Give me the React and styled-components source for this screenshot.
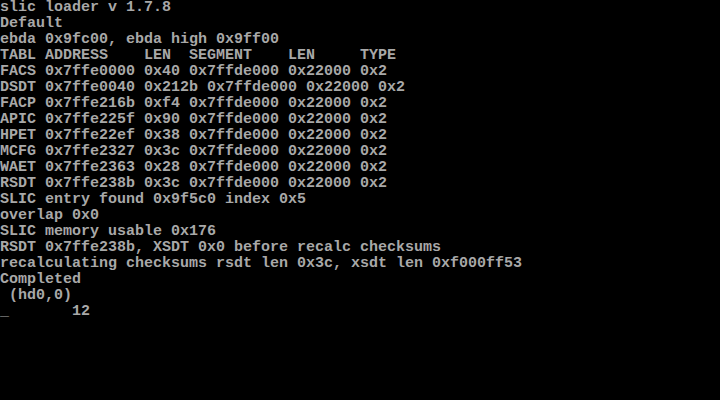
import React from "react";
import styled, { createGlobalStyle } from "styled-components";

const Global = createGlobalStyle`
  html, body { margin: 0; padding: 0; background: #000; }
  body { width: 720px; height: 400px; overflow: hidden; }
`;

const Screen = styled.div`
  width: 720px;
  height: 400px;
  background: #000;
  color: #a8a8a8;
  font-family: "Liberation Mono", "DejaVu Sans Mono", monospace;
  font-size: 15px;
  font-weight: bold;
  line-height: 16px;
  display: flex;
  flex-direction: column;
`;

const Line = styled.div`
  height: 16px;
  white-space: pre;
`;

const lines = [
  "slic loader v 1.7.8",
  "Default",
  "ebda 0x9fc00, ebda high 0x9ff00",
  "TABL ADDRESS    LEN  SEGMENT    LEN     TYPE",
  "FACS 0x7ffe0000 0x40 0x7ffde000 0x22000 0x2",
  "DSDT 0x7ffe0040 0x212b 0x7ffde000 0x22000 0x2",
  "FACP 0x7ffe216b 0xf4 0x7ffde000 0x22000 0x2",
  "APIC 0x7ffe225f 0x90 0x7ffde000 0x22000 0x2",
  "HPET 0x7ffe22ef 0x38 0x7ffde000 0x22000 0x2",
  "MCFG 0x7ffe2327 0x3c 0x7ffde000 0x22000 0x2",
  "WAET 0x7ffe2363 0x28 0x7ffde000 0x22000 0x2",
  "RSDT 0x7ffe238b 0x3c 0x7ffde000 0x22000 0x2",
  "SLIC entry found 0x9f5c0 index 0x5",
  "overlap 0x0",
  "SLIC memory usable 0x176",
  "RSDT 0x7ffe238b, XSDT 0x0 before recalc checksums",
  "recalculating checksums rsdt len 0x3c, xsdt len 0xf000ff53",
  "Completed",
  " (hd0,0)",
  "_       12",
];

export default function App() {
  return (
    <>
      <Global />
      <Screen>
        {lines.map((l, i) => (
          <Line key={i}>{l}</Line>
        ))}
      </Screen>
    </>
  );
}
